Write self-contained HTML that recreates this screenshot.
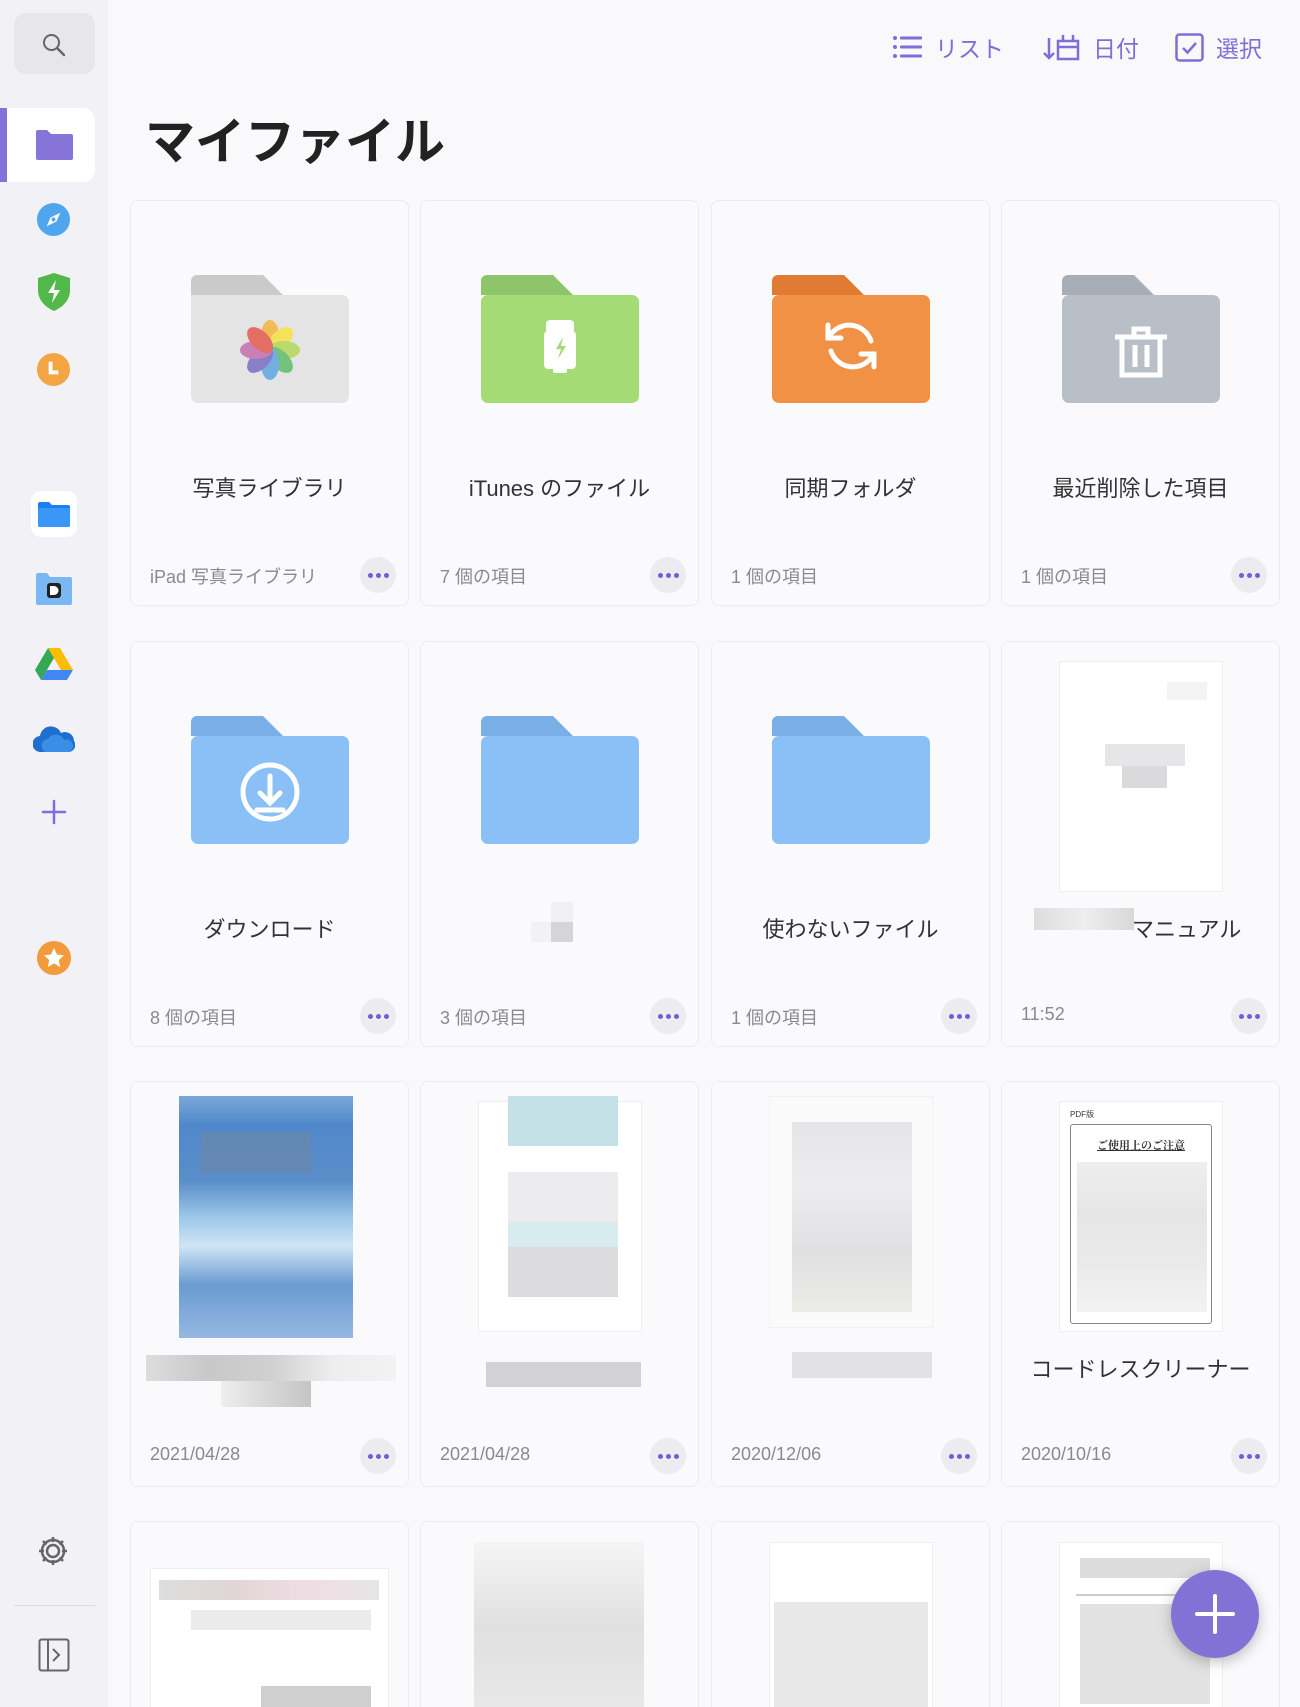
<!DOCTYPE html>
<html><head><meta charset="utf-8">
<style>
*{margin:0;padding:0;box-sizing:border-box}
html,body{width:1300px;height:1707px;overflow:hidden}
body{background:#f9f9fb;font-family:"Liberation Sans","Noto Sans CJK JP",sans-serif}
#wrap{position:relative;width:1300px;height:1707px;overflow:hidden;background:#f9f9fb}
.side{position:absolute;left:0;top:0;width:108px;height:1707px;background:#f1f1f6}
.abs{position:absolute}
.card{position:absolute;width:279px;height:406px;background:#fafafc;border:1.5px solid #ececf0;border-radius:8px;overflow:hidden}
.card.last{height:186px;border-bottom:none;border-radius:8px 8px 0 0}
.name{position:absolute;left:0;right:0;top:270px;text-align:center;font-size:22px;color:#333}
.sub{position:absolute;left:19px;top:362px;font-size:18px;color:#8a8a8e}
.dots{position:absolute;right:12px;top:356px;width:36px;height:36px;border-radius:50%;background:#ececf0;display:flex;align-items:center;justify-content:center;gap:3px}
.dots i{width:5px;height:5px;border-radius:50%;background:#6c5fd8}
.folder{position:absolute;left:60px;top:74px}
.tb{position:absolute;top:30px;font-size:23px;color:#7d6fd8;display:flex;align-items:center;gap:12px}
.px{position:absolute}
</style></head><body><div id="wrap">
<div class="side">
  <div class="abs" style="left:14px;top:13px;width:81px;height:61px;background:#e6e6eb;border-radius:12px"></div>
  <svg class="abs" style="left:41px;top:32px" width="26" height="26" viewBox="0 0 26 26"><circle cx="10.5" cy="10.5" r="7.5" fill="none" stroke="#666" stroke-width="2"/><path d="M16 16l7 7" stroke="#666" stroke-width="2.4" stroke-linecap="round"/></svg>
  <div class="abs" style="left:0;top:108px;width:95px;height:74px;background:#fff;border-radius:0 12px 12px 0"></div>
  <div class="abs" style="left:0;top:108px;width:7px;height:74px;background:#8472d8"></div>
  <svg class="abs" style="left:36px;top:130px" width="37" height="30" viewBox="0 0 37 30"><path d="M0 2a2 2 0 0 1 2-2h9l4 4h20a2 2 0 0 1 2 2v22a2 2 0 0 1-2 2H2a2 2 0 0 1-2-2z" fill="#8674d8"/></svg>
  <svg class="abs" style="left:36px;top:202px" width="35" height="35" viewBox="0 0 36 36"><circle cx="18" cy="18" r="17" fill="#4fa6ef"/><path d="M25 11l-10 5-4 9 10-5z" fill="#fff"/><circle cx="18" cy="18" r="2" fill="#4fa6ef"/></svg>
  <svg class="abs" style="left:38px;top:273px" width="32" height="38" viewBox="0 0 32 38"><path d="M16 0l16 5v12c0 10-7 17-16 21C7 34 0 27 0 17V5z" fill="#52b84a"/><path d="M18 7l-8 13h6l-2 10 8-13h-6z" fill="#fff"/></svg>
  <svg class="abs" style="left:36px;top:352px" width="35" height="35" viewBox="0 0 36 36"><circle cx="18" cy="18" r="17" fill="#f3a443"/><path d="M15 10v11h8" stroke="#fff" stroke-width="4" fill="none"/></svg>
  <div class="abs" style="left:31px;top:491px;width:46px;height:46px;background:#fff;border-radius:10px"></div>
  <svg class="abs" style="left:38px;top:502px" width="32" height="25" viewBox="0 0 32 25"><path d="M0 2a2 2 0 0 1 2-2h9l3 3h16a2 2 0 0 1 2 2v18a2 2 0 0 1-2 2H2a2 2 0 0 1-2-2z" fill="#1c7ef0"/><rect x="0" y="6" width="32" height="19" rx="2" fill="#3a97f8"/></svg>
  <svg class="abs" style="left:36px;top:573px" width="36" height="32" viewBox="0 0 36 32"><path d="M0 2a2 2 0 0 1 2-2h9l3 4h20a2 2 0 0 1 2 2v24a2 2 0 0 1-2 2H2a2 2 0 0 1-2-2z" fill="#79b8f2"/><rect x="11" y="10" width="14" height="15" rx="3" fill="#222"/><path d="M14 13h4a4.5 4.5 0 0 1 0 9h-4z" fill="#fff"/></svg>
  <svg class="abs" style="left:35px;top:648px" width="38" height="32" viewBox="0 0 38 32"><path d="M13 0h12l13 22H26z" fill="#fbbc04"/><path d="M13 0L0 22l6 10 13-22z" fill="#34a853"/><path d="M6 32h26l6-10H12z" fill="#4285f4"/></svg>
  <svg class="abs" style="left:33px;top:725px" width="42" height="27" viewBox="0 0 42 27"><path d="M8 27a8 8 0 0 1-1-16 11 11 0 0 1 21-3 9 9 0 0 1 13 8 7 7 0 0 1-5 11z" fill="#1f6fd1"/><path d="M12 27a7 7 0 0 1 3-13 9 9 0 0 1 16 1 6 6 0 0 1 5 12z" fill="#3a8ee6"/></svg>
  <svg class="abs" style="left:41px;top:799px" width="26" height="26" viewBox="0 0 26 26"><path d="M13 2v22M2 13h22" stroke="#7d6fd8" stroke-width="2.5" stroke-linecap="round"/></svg>
  <svg class="abs" style="left:36px;top:940px" width="36" height="36" viewBox="0 0 36 36"><circle cx="18" cy="18" r="17" fill="#f39a3b"/><path d="M18 8l3 6.5 7 .8-5.2 4.8 1.5 7-6.3-3.6-6.3 3.6 1.5-7L8 15.3l7-.8z" fill="#fff"/></svg>
  <svg class="abs" style="left:36px;top:1534px" width="34" height="34" viewBox="0 0 34 34"><g fill="none" stroke="#666" stroke-width="2.5"><circle cx="17" cy="17" r="6"/><path d="M17 3v5M17 26v5M3 17h5M26 17h5M7 7l3.5 3.5M23.5 23.5L27 27M7 27l3.5-3.5M23.5 10.5L27 7"/><circle cx="17" cy="17" r="11"/></g></svg>
  <div class="abs" style="left:14px;top:1605px;width:81px;height:1px;background:#dcdce2"></div>
  <svg class="abs" style="left:38px;top:1638px" width="32" height="34" viewBox="0 0 32 34"><rect x="1.5" y="1.5" width="29" height="31" rx="2" fill="none" stroke="#666" stroke-width="2"/><path d="M10 2v30M15 11l6 6-6 6" stroke="#666" stroke-width="2" fill="none"/></svg>
</div>

<div class="tb" style="left:893px"><svg width="30" height="24" viewBox="0 0 30 24"><g fill="#7d6fd8"><circle cx="2" cy="3" r="2"/><circle cx="2" cy="12" r="2"/><circle cx="2" cy="21" r="2"/><rect x="7" y="1.5" width="22" height="3" rx="1"/><rect x="7" y="10.5" width="22" height="3" rx="1"/><rect x="7" y="19.5" width="22" height="3" rx="1"/></g></svg><span>リスト</span></div>
<div class="tb" style="left:1043px"><svg width="38" height="30" viewBox="0 0 38 30"><g fill="none" stroke="#7d6fd8" stroke-width="2.5"><path d="M6 6v20M1 21l5 5 5-5"/><path d="M15 9h20v18H15zM15 15h20M20 3v7M30 3v7"/></g></svg><span>日付</span></div>
<div class="tb" style="left:1175px"><svg width="29" height="29" viewBox="0 0 29 29"><rect x="1.5" y="1.5" width="26" height="26" rx="3" fill="none" stroke="#7d6fd8" stroke-width="2.5"/><path d="M8 15l4.5 4.5L21 10" fill="none" stroke="#7d6fd8" stroke-width="2.5"/></svg><span>選択</span></div>

<div class="abs" style="left:145px;top:102px;font-size:50px;font-weight:bold;color:#222">マイファイル</div>

<!-- Row 1 -->
<div class="card" style="left:130px;top:200px">
  <svg class="folder" width="158" height="128" viewBox="0 0 158 128"><path d="M0 6a6 6 0 0 1 6-6h66l20 20H0z" fill="#cacaca"/><rect y="20" width="158" height="108" rx="7" fill="#e4e4e4"/><rect y="20" width="70" height="10" fill="#e4e4e4"/>
  <g transform="translate(79 75)" opacity="0.85"><ellipse rx="9" ry="16" cy="-14" fill="#f5b63d"/><ellipse rx="9" ry="16" cy="-14" transform="rotate(45)" fill="#f7e244"/><ellipse rx="9" ry="16" cy="-14" transform="rotate(90)" fill="#b6d85a"/><ellipse rx="9" ry="16" cy="-14" transform="rotate(135)" fill="#5fbb6b"/><ellipse rx="9" ry="16" cy="-14" transform="rotate(180)" fill="#5ea6e3"/><ellipse rx="9" ry="16" cy="-14" transform="rotate(225)" fill="#7a6dc4"/><ellipse rx="9" ry="16" cy="-14" transform="rotate(270)" fill="#c46fb0"/><ellipse rx="9" ry="16" cy="-14" transform="rotate(315)" fill="#e55a4e"/></g></svg>
  <div class="name">写真ライブラリ</div><div class="sub">iPad 写真ライブラリ</div><div class="dots"><i></i><i></i><i></i></div></div>
<div class="card" style="left:420px;top:200px">
  <svg class="folder" width="158" height="128" viewBox="0 0 158 128"><path d="M0 6a6 6 0 0 1 6-6h66l20 20H0z" fill="#8dc56a"/><rect y="20" width="158" height="108" rx="7" fill="#a4db75"/><rect x="65" y="45" width="28" height="14" rx="4" fill="#fff"/><rect x="63" y="56" width="32" height="38" rx="4" fill="#fff"/><rect x="72" y="92" width="14" height="6" rx="2" fill="#fff"/><path d="M82 62l-7 12h5l-3 10 8-13h-5z" fill="#a4db75"/></svg>
  <div class="name">iTunes のファイル</div><div class="sub">7 個の項目</div><div class="dots"><i></i><i></i><i></i></div></div>
<div class="card" style="left:711px;top:200px">
  <svg class="folder" width="158" height="128" viewBox="0 0 158 128"><path d="M0 6a6 6 0 0 1 6-6h66l20 20H0z" fill="#e07b33"/><rect y="20" width="158" height="108" rx="7" fill="#f09145"/><g fill="none" stroke="#fff" stroke-width="5" stroke-linecap="round"><path d="M57 62a23 23 0 0 1 42 4"/><path d="M101 80a23 23 0 0 1-42-4"/><path d="M56 50v13h13M102 92V79H89"/></g></svg>
  <div class="name">同期フォルダ</div><div class="sub">1 個の項目</div></div>
<div class="card" style="left:1001px;top:200px">
  <svg class="folder" width="158" height="128" viewBox="0 0 158 128"><path d="M0 6a6 6 0 0 1 6-6h66l20 20H0z" fill="#a8aeb6"/><rect y="20" width="158" height="108" rx="7" fill="#b9bfc7"/><g fill="none" stroke="#fff" stroke-width="5"><path d="M53 62h52M72 62v-8h14v8M60 62v38h38V62M73 70v22M85 70v22"/></g></svg>
  <div class="name">最近削除した項目</div><div class="sub">1 個の項目</div><div class="dots"><i></i><i></i><i></i></div></div>

<!-- Row 2 -->
<div class="card" style="left:130px;top:641px">
  <svg class="folder" width="158" height="128" viewBox="0 0 158 128"><path d="M0 6a6 6 0 0 1 6-6h66l20 20H0z" fill="#7aaee6"/><rect y="20" width="158" height="108" rx="7" fill="#8bc0f6"/><circle cx="79" cy="76" r="27" fill="none" stroke="#fff" stroke-width="5"/><path d="M79 60v26M69 77l10 10 10-10M66 94h26" fill="none" stroke="#fff" stroke-width="5" stroke-linecap="round"/></svg>
  <div class="name">ダウンロード</div><div class="sub">8 個の項目</div><div class="dots"><i></i><i></i><i></i></div></div>
<div class="card" style="left:420px;top:641px">
  <svg class="folder" width="158" height="128" viewBox="0 0 158 128"><path d="M0 6a6 6 0 0 1 6-6h66l20 20H0z" fill="#7aaee6"/><rect y="20" width="158" height="108" rx="7" fill="#8bc0f6"/></svg>
  <div class="px" style="left:130px;top:260px;width:22px;height:20px;background:#f0f0f2"></div>
  <div class="px" style="left:130px;top:280px;width:22px;height:20px;background:#d5d5d8"></div>
  <div class="px" style="left:110px;top:280px;width:20px;height:20px;background:#f2f2f4"></div>
  <div class="sub">3 個の項目</div><div class="dots"><i></i><i></i><i></i></div></div>
<div class="card" style="left:711px;top:641px">
  <svg class="folder" width="158" height="128" viewBox="0 0 158 128"><path d="M0 6a6 6 0 0 1 6-6h66l20 20H0z" fill="#7aaee6"/><rect y="20" width="158" height="108" rx="7" fill="#8bc0f6"/></svg>
  <div class="name">使わないファイル</div><div class="sub">1 個の項目</div><div class="dots"><i></i><i></i><i></i></div></div>
<div class="card" style="left:1001px;top:641px">
  <div class="px" style="left:57px;top:19px;width:164px;height:231px;background:#fff;border:1px solid #eee"></div>
  <div class="px" style="left:103px;top:102px;width:80px;height:22px;background:#e6e6e8"></div>
  <div class="px" style="left:120px;top:124px;width:45px;height:22px;background:#dadadc"></div>
  <div class="px" style="left:165px;top:40px;width:40px;height:18px;background:#f3f3f4"></div>
  <div class="px" style="left:32px;top:266px;width:100px;height:22px;background:linear-gradient(90deg,#ddd,#eee,#d8d8d8)"></div>
  <div class="px" style="left:130px;top:270px;font-size:22px;color:#333">マニュアル</div>
  <div class="sub">11:52</div><div class="dots"><i></i><i></i><i></i></div></div>

<!-- Row 3 -->
<div class="card" style="left:130px;top:1081px">
  <div class="px" style="left:48px;top:14px;width:174px;height:242px;background:linear-gradient(180deg,#7ca8d8 0%,#4f88cb 12%,#5a8ec8 35%,#9cc6e9 50%,#cfe5f5 62%,#6a9bd1 78%,#95b8e0 100%)"></div>
  <div class="px" style="left:70px;top:50px;width:110px;height:40px;background:#6f87a5;opacity:.6"></div>
  <div class="px" style="left:15px;top:273px;width:250px;height:26px;background:linear-gradient(90deg,#ddd,#c8c8c8,#d0d0d0,#eee,#f2f2f2)"></div>
  <div class="px" style="left:90px;top:299px;width:90px;height:26px;background:linear-gradient(90deg,#eee,#d8d8d8,#c5c5c5)"></div>
  <div class="sub">2021/04/28</div><div class="dots"><i></i><i></i><i></i></div></div>
<div class="card" style="left:420px;top:1081px">
  <div class="px" style="left:57px;top:19px;width:164px;height:231px;background:#fff;border:1px solid #eee"></div>
  <div class="px" style="left:87px;top:14px;width:110px;height:50px;background:#c3e1e6"></div>
  <div class="px" style="left:87px;top:90px;width:110px;height:50px;background:#ececee"></div>
  <div class="px" style="left:87px;top:140px;width:110px;height:25px;background:#d8ecef"></div>
  <div class="px" style="left:87px;top:165px;width:110px;height:50px;background:#dcdcde"></div>
  <div class="px" style="left:65px;top:280px;width:155px;height:25px;background:#d2d2d4"></div>
  <div class="sub">2021/04/28</div><div class="dots"><i></i><i></i><i></i></div></div>
<div class="card" style="left:711px;top:1081px">
  <div class="px" style="left:57px;top:14px;width:164px;height:232px;background:#fafafa;border:1px solid #f0f0f0"></div>
  <div class="px" style="left:80px;top:40px;width:120px;height:190px;background:linear-gradient(180deg,#e5e5e7,#ececee,#e0e0e2,#ebebe6)"></div>
  <div class="px" style="left:80px;top:270px;width:140px;height:26px;background:#e2e2e4"></div>
  <div class="sub">2020/12/06</div><div class="dots"><i></i><i></i><i></i></div></div>
<div class="card" style="left:1001px;top:1081px">
  <div class="px" style="left:57px;top:19px;width:164px;height:231px;background:#fff;border:1px solid #eee"></div>
  <div class="px" style="left:68px;top:27px;font-size:8px;color:#333">PDF版</div>
  <div class="px" style="left:68px;top:42px;width:142px;height:200px;border:1.5px solid #888;border-radius:3px;background:#fff"></div>
  <div class="px" style="left:75px;top:55px;width:128px;text-align:center;font-size:11px;color:#333;text-decoration:underline;font-family:'Noto Serif CJK SC',serif;font-weight:bold">ご使用上のご注意</div>
  <div class="px" style="left:75px;top:80px;width:130px;height:150px;background:linear-gradient(180deg,#eeeeee,#e6e6e6,#eaeaea,#f3f3f3)"></div>
  <div class="name">コードレスクリーナー</div>
  <div class="sub">2020/10/16</div><div class="dots"><i></i><i></i><i></i></div></div>

<!-- Row 4 -->
<div class="card last" style="left:130px;top:1521px">
  <div class="px" style="left:19px;top:46px;width:239px;height:150px;background:#fff;border:1px solid #eee"></div>
  <div class="px" style="left:28px;top:58px;width:220px;height:20px;background:linear-gradient(90deg,#ddd,#e0d6d6,#f0dde3,#e6e6e6)"></div>
  <div class="px" style="left:60px;top:88px;width:180px;height:20px;background:#ebebeb"></div>
  <div class="px" style="left:130px;top:164px;width:110px;height:30px;background:#cfcfcf"></div>
</div>
<div class="card last" style="left:420px;top:1521px">
  <div class="px" style="left:53px;top:20px;width:170px;height:170px;background:linear-gradient(180deg,#f5f5f5,#e0e0e0,#e8e8e8)"></div></div>
<div class="card last" style="left:711px;top:1521px">
  <div class="px" style="left:57px;top:20px;width:164px;height:170px;background:#fff;border:1px solid #eee"></div>
  <div class="px" style="left:62px;top:80px;width:154px;height:110px;background:#e8e8e8"></div></div>
<div class="card last" style="left:1001px;top:1521px">
  <div class="px" style="left:57px;top:20px;width:164px;height:170px;background:#fff;border:1px solid #eee"></div>
  <div class="px" style="left:78px;top:36px;width:130px;height:20px;background:#dcdcdc"></div>
  <div class="px" style="left:74px;top:72px;width:138px;height:2px;background:#ccc"></div>
  <div class="px" style="left:78px;top:82px;width:130px;height:100px;background:#e2e2e2"></div></div>

<div class="abs" style="left:1171px;top:1570px;width:88px;height:88px;border-radius:50%;background:#8272d6;box-shadow:0 4px 14px rgba(0,0,0,.25)"></div>
<svg class="abs" style="left:1193px;top:1592px" width="44" height="44" viewBox="0 0 44 44"><path d="M22 4v36M4 22h36" stroke="#fff" stroke-width="4" stroke-linecap="round"/></svg>
</div></body></html>
